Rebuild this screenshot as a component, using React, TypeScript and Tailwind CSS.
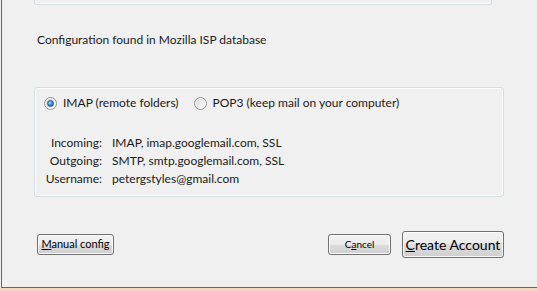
import React from 'react';

const ui = { fontFamily: 'Lato, "Noto Sans", sans-serif' };

const Radio = ({ checked }: { checked?: boolean }) => (
  <span className="relative flex h-[13px] w-[13px] shrink-0 items-center justify-center rounded-full border border-[#8f9396] bg-[linear-gradient(135deg,#d6d6d6_0%,#f4f4f4_70%,#ffffff_100%)] shadow-[inset_0_0_0_1px_#f7f7f7]">
    {checked && (
      <span className="h-[7px] w-[7px] rounded-full border border-[#1b4f86] bg-[radial-gradient(circle_at_35%_35%,#9fd3f7_0%,#2f86d0_55%,#124f8f_100%)]" />
    )}
  </span>
);

const Button = ({
  children,
  className = '',
}: {
  children: React.ReactNode;
  className?: string;
}) => (
  <button
    className={`flex items-center justify-center whitespace-nowrap rounded-[3px] border border-[#707070] bg-[linear-gradient(to_bottom,#f2f2f2_0%,#ebebeb_50%,#dddddd_50%,#cfcfcf_100%)] text-black shadow-[inset_0_0_0_1px_#fbfbfb] ${className}`}
    style={ui}
  >
    {children}
  </button>
);

const rows = [
  { label: 'Incoming:', value: 'IMAP, imap.googlemail.com, SSL' },
  { label: 'Outgoing:', value: 'SMTP, smtp.googlemail.com, SSL' },
  { label: 'Username:', value: 'petergstyles@gmail.com' },
];

export default function App() {
  return (
    <div className="flex h-[291px] w-[537px] flex-col overflow-hidden bg-[#f5d7bd] text-[12px] text-[#1a1a1a]" style={ui}>
      <div className="h-[288px] bg-[#f0f0f0] pl-px">
        <div className="flex h-full flex-col border-b border-l border-[#6c635d] pl-[32px] pr-[33px]">
          {/* tail of the panel above */}
          <div className="h-[5px] w-[458px] rounded-b-[3px] border-x border-b border-[#d3dde4] shadow-[inset_0_-1px_0_#ffffff]" />

          <p className="mt-[27px] h-[16px] pl-[3px] leading-[16px]">Configuration found in Mozilla ISP database</p>

          {/* settings box */}
          <div className="mt-[39px] flex h-[110px] w-[470px] flex-col rounded-[3px] border border-[#d3dde4] pl-[9px] pt-[7px] shadow-[inset_0_0_0_1px_#fafafa]">
            <div className="flex h-[16px] items-center">
              <Radio checked />
              <span className="ml-[6px] leading-[16px]">IMAP (remote folders)</span>
              <span className="ml-[15px]">
                <Radio />
              </span>
              <span className="ml-[6px] leading-[16px]">POP3 (keep mail on your computer)</span>
            </div>

            <div className="mt-[24px] flex flex-col gap-[2px]">
              {rows.map((r) => (
                <div key={r.label} className="flex h-[16px] items-center leading-[16px]">
                  <span className="w-[58px] text-right">{r.label}</span>
                  <span className="ml-[10px]">{r.value}</span>
                </div>
              ))}
            </div>
          </div>

          {/* buttons */}
          <div className="mt-[34px] flex items-center">
            <Button className="ml-[3px] h-[21px] w-[77px] text-[11px]">
              <span>
                <span className="underline">M</span>anual config
              </span>
            </Button>
            <div className="flex-1" />
            <Button className="h-[21px] w-[63px] text-[10px]">
              <span>
                C<span className="underline">a</span>ncel
              </span>
            </Button>
            <Button className="ml-[11px] h-[27px] w-[102px] text-[14px]">
              <span>
                <span className="underline">C</span>reate Account
              </span>
            </Button>
          </div>
        </div>
      </div>
    </div>
  );
}
